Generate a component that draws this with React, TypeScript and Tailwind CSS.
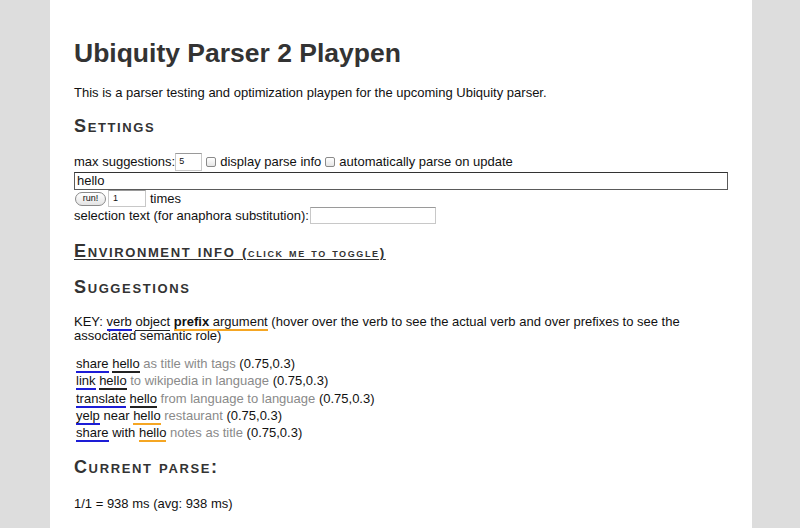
import React from "react";

const font = { fontFamily: '"Liberation Sans", Arial, Helvetica, sans-serif' };

function Verb({ children }: { children: React.ReactNode }) {
  return <span className="border-b-2 border-[#1d1dd6]">{children}</span>;
}
function Obj({ children }: { children: React.ReactNode }) {
  return <span className="border-b-2 border-[#222]">{children}</span>;
}
function Arg({ children }: { children: React.ReactNode }) {
  return <span className="border-b-2 border-[#f5a623]">{children}</span>;
}

function Check() {
  return (
    <span className="inline-block w-[10px] h-[10px] rounded-[2px] border border-[#8a8a8a] bg-gradient-to-b from-white to-[#e6e6e6] mx-[4px] align-middle" />
  );
}

const suggestions: { v: string; mid?: string; o: string; oColor: "obj" | "arg"; rest: string }[] = [
  { v: "share", o: "hello", oColor: "obj", rest: "as title with tags" },
  { v: "link", o: "hello", oColor: "obj", rest: "to wikipedia in language" },
  { v: "translate", o: "hello", oColor: "obj", rest: "from language to language" },
  { v: "yelp", mid: "near", o: "hello", oColor: "arg", rest: "restaurant" },
  { v: "share", mid: "with", o: "hello", oColor: "arg", rest: "notes as title" },
];

export default function App() {
  return (
    <div className="min-h-[528px] w-[800px] bg-[#dddddd]" style={font}>
      <div className="ml-[50px] w-[702px] min-h-[528px] bg-white px-[24px] pt-[35px] text-[13px] text-[#111]">
        <h1 className="text-[26.5px] leading-[36px] font-bold text-[#333]">
          Ubiquity Parser 2 Playpen
        </h1>
        <p className="mt-[14px] leading-[16px]">
          This is a parser testing and optimization playpen for the upcoming Ubiquity parser.
        </p>
        <h2 className="mt-[14px] text-[18px] leading-[22px] font-bold text-[#333] [font-variant:small-caps] tracking-[0.09em]">
          Settings
        </h2>
        <div className="mt-[16px] flex flex-col">
          <div className="h-[18px] flex items-center">
            <span>max suggestions:</span>
            <span className="w-[27px] h-[18px] border border-[#c8c8c8] border-t-[#9a9a9a] text-[9px] flex items-center pl-[3px]">5</span>
            <Check />
            <span>display parse info</span>
            <Check />
            <span>automatically parse on update</span>
          </div>
          <div className="mt-[1px] h-[18px] w-[654px] border border-[#5a5a5a] border-t-[#333] flex items-center pl-[2px]">
            hello
          </div>
          <div className="h-[17px] flex items-center">
            <span className="ml-[1px] w-[31px] h-[14px] rounded-full border border-[#8a8a8a] bg-gradient-to-b from-white to-[#e4e4e4] text-[9px] flex items-center justify-center">
              run!
            </span>
            <span className="ml-[2px] w-[38px] h-[17px] border border-[#c8c8c8] border-t-[#9a9a9a] text-[9px] flex items-center pl-[4px]">1</span>
            <span className="ml-[4px]">times</span>
          </div>
          <div className="h-[17px] flex items-center">
            <span>selection text (for anaphora substitution):</span>
            <span className="ml-[1px] w-[126px] h-[17px] border border-[#c8c8c8] border-t-[#9a9a9a]" />
          </div>
        </div>
        <h2 className="mt-[16px] text-[18px] leading-[22px] font-bold text-[#333] [font-variant:small-caps] tracking-[0.09em] underline underline-offset-[2px] decoration-[1px]">
          Environment info <span className="text-[13.5px]">(click me to toggle)</span>
        </h2>
        <h2 className="mt-[12px] text-[18px] leading-[22px] font-bold text-[#333] [font-variant:small-caps] tracking-[0.09em]">
          Suggestions
        </h2>
        <p className="mt-[17px] leading-[14px]">
          KEY: <Verb>verb</Verb> <span className="border-b border-[#222] pb-[1px]">object</span>{" "}
          <Arg>
            <b>prefix</b> argument
          </Arg>{" "}
          (hover over the verb to see the actual verb and over prefixes to see the associated semantic role)
        </p>
        <div className="mt-[12px] ml-[2px] flex flex-col leading-[17.25px]">
          {suggestions.map((s, i) => (
            <div key={i}>
              <Verb>{s.v}</Verb> {s.mid ? <>{s.mid} </> : null}
              {s.oColor === "obj" ? <Obj>{s.o}</Obj> : <Arg>{s.o}</Arg>}{" "}
              <span className="text-[#8a8a8a]">{s.rest}</span> (0.75,0.3)
            </div>
          ))}
        </div>
        <h2 className="mt-[15px] text-[18px] leading-[22px] font-bold text-[#333] [font-variant:small-caps] tracking-[0.09em]">
          Current parse:
        </h2>
        <p className="mt-[18px] leading-[16px]">1/1 = 938 ms (avg: 938 ms)</p>
      </div>
    </div>
  );
}
